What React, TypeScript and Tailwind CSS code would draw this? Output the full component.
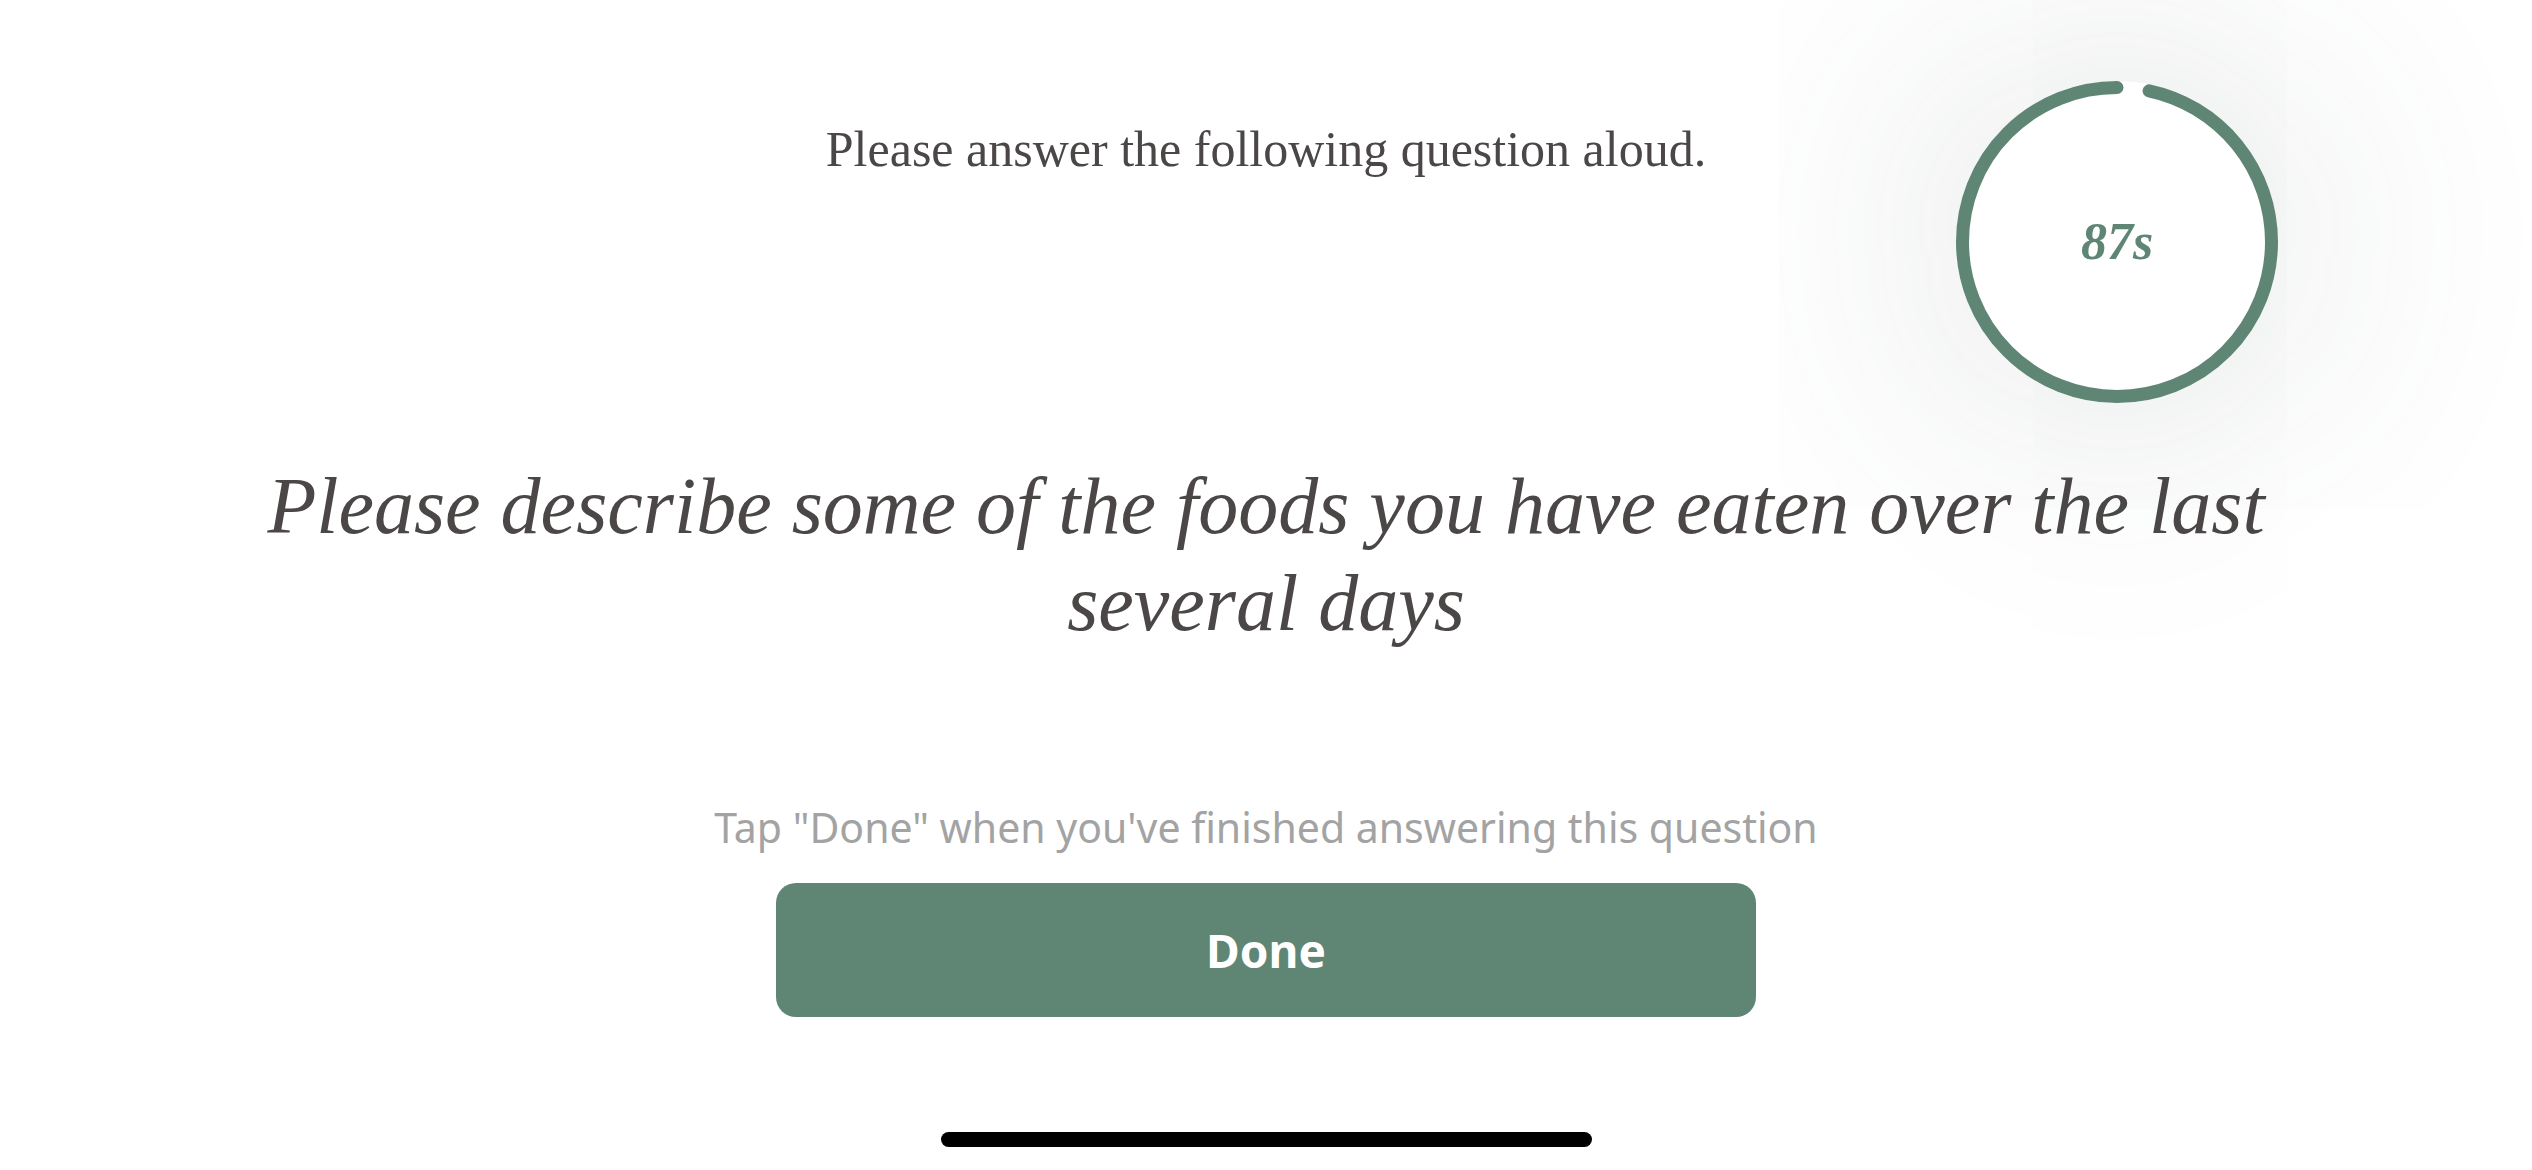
import React from 'react';

const GREEN = '#5f8575';

const TimerRing: React.FC<{ seconds: number; total: number }> = ({ seconds, total }) => {
  const r = 154.5;
  const c = 2 * Math.PI * r;
  const gap = (1 - seconds / total) * c;
  return (
    <div className="absolute left-[1956px] top-[81px] w-[322px] h-[322px] rounded-full bg-white shadow-[0_0_240px_60px_rgba(60,85,75,0.11)]">
      <svg width="322" height="322" viewBox="0 0 322 322" className="absolute inset-0">
        <circle
          cx="161"
          cy="161"
          r={r}
          fill="none"
          stroke={GREEN}
          strokeWidth="13"
          strokeLinecap="round"
          strokeDasharray={`${c - gap} ${gap}`}
          transform="rotate(-90 161 161)"
          strokeDashoffset={-gap}
        />
      </svg>
      <div className="absolute inset-0 flex items-center justify-center">
        <span className="font-['Liberation_Serif',serif] italic font-bold text-[52px] leading-none text-[#5f8575]">
          {seconds}s
        </span>
      </div>
    </div>
  );
};

const App: React.FC = () => {
  return (
    <div className="relative w-[2532px] h-[1170px] bg-white overflow-hidden flex flex-col items-center">
      {/* Prompt */}
      <p className="pt-[120px] font-['Liberation_Serif',serif] text-[50px] leading-[58px] text-[#4b4747]">
        Please answer the following question aloud.
      </p>

      {/* Question */}
      <h1 className="mt-[280px] max-w-[2080px] text-center font-['Liberation_Serif',serif] italic text-[80px] leading-[97px] text-[#4b4747]">
        Please describe some of the foods you have eaten over the last several days
      </h1>

      {/* Hint */}
      <p className="mt-[151px] font-['Noto_Sans',sans-serif] text-[41px] leading-[48px] text-[#a3a3a3]">
        Tap "Done" when you've finished answering this question
      </p>

      {/* Done button */}
      <button className="mt-[32px] w-[980px] h-[134px] rounded-[20px] bg-[#5f8575] flex items-center justify-center font-['Noto_Sans',sans-serif] font-bold text-[46px] text-white">
        Done
      </button>

      {/* Home indicator */}
      <div className="mt-[115px] w-[651px] h-[15px] rounded-full bg-black" />

      <TimerRing seconds={87} total={90} />
    </div>
  );
};

export default App;
